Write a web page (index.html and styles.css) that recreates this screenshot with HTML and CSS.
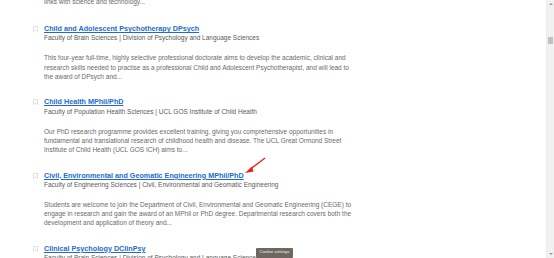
FILE: index.html
```html
<!DOCTYPE html>
<html lang="en">
<head>
    <meta charset="UTF-8">
    <meta name="viewport" content="width=device-width, initial-scale=1.0">
    <title>Programme search results</title>
    <link rel="stylesheet" href="styles.css">
</head>
<body>
    <div class="page">
        <div class="results">
            <div class="item">
                <div class="mark"></div>
                <div class="body">
                    <p class="desc first">links with science and technology...</p>
                </div>
            </div>
            <div class="item">
                <div class="mark"><svg viewBox="0 0 5 6"><path d="M0.5 0.5h4v5l-2-1.5l-2 1.5z"/></svg></div>
                <div class="body">
                    <a class="title" href="#">Child and Adolescent Psychotherapy DPsych</a>
                    <div class="faculty">Faculty of Brain Sciences | Division of Psychology and Language Sciences</div>
                    <p class="desc">This four-year full-time, highly selective professional doctorate aims to develop the academic, clinical and<br>research skills needed to practise as a professional Child and Adolescent Psychotherapist, and will lead to<br>the award of DPsych and...</p>
                </div>
            </div>
            <div class="item">
                <div class="mark"><svg viewBox="0 0 5 6"><path d="M0.5 0.5h4v5l-2-1.5l-2 1.5z"/></svg></div>
                <div class="body">
                    <a class="title" href="#">Child Health MPhil/PhD</a>
                    <div class="faculty">Faculty of Population Health Sciences | UCL GOS Institute of Child Health</div>
                    <p class="desc">Our PhD research programme provides excellent training, giving you comprehensive opportunities in<br>fundamental and translational research of childhood health and disease. The UCL Great Ormond Street<br>Institute of Child Health (UCL GOS ICH) aims to...</p>
                </div>
            </div>
            <div class="item">
                <div class="mark"><svg viewBox="0 0 5 6"><path d="M0.5 0.5h4v5l-2-1.5l-2 1.5z"/></svg></div>
                <div class="body">
                    <a class="title" href="#">Civil, Environmental and Geomatic Engineering MPhil/PhD</a>
                    <div class="faculty">Faculty of Engineering Sciences | Civil, Environmental and Geomatic Engineering</div>
                    <p class="desc">Students are welcome to join the Department of Civil, Environmental and Geomatic Engineering (CEGE) to<br>engage in research and gain the award of an MPhil or PhD degree. Departmental research covers both the<br>development and application of theory and...</p>
                </div>
            </div>
            <div class="item">
                <div class="mark"><svg viewBox="0 0 5 6"><path d="M0.5 0.5h4v5l-2-1.5l-2 1.5z"/></svg></div>
                <div class="body">
                    <a class="title" href="#">Clinical Psychology DClinPsy</a>
                    <div class="faculty">Faculty of Brain Sciences | Division of Psychology and Language Sciences</div>
                </div>
            </div>

            <svg class="arrow" viewBox="0 0 24 20">
                <path d="M22 1L6 13" stroke="#e8231d" stroke-width="1.4" fill="none"/>
                <path d="M2 16L9 9.5L10.5 14.5z" fill="#e8231d"/>
            </svg>
            <div class="cookie">Cookie settings</div>
        </div>

        <div class="scrollbar">
            <div class="arrow-up"></div>
            <div class="thumb"></div>
            <div class="arrow-down"></div>
        </div>
    </div>
</body>
</html>
```

FILE: styles.css
```css
body {
    margin: 0;
    background-color: #fff;
    font-family: "Liberation Sans", Arial, sans-serif;
    overflow: hidden;
}
.page {
    display: flex;
    width: 554px;
    height: 258px;
    overflow: hidden;
}
.results {
    position: relative;
    flex: 1;
    margin-top: -2.7px;
}
.item {
    display: flex;
    padding-bottom: 16.1px;
}
.item:first-child {
    padding-bottom: 17.4px;
}
.mark {
    width: 11px;
    margin-left: 33px;
    padding-top: 2px;
}
.mark svg {
    display: block;
    width: 5px;
    height: 6px;
}
.mark path {
    fill: none;
    stroke: #d9d9d9;
    stroke-width: 0.8;
}
.body {
    flex: 1;
}
.title {
    display: block;
    font-size: 7.2px;
    line-height: 9.3px;
    font-weight: bold;
    color: #1b6bd0;
    text-decoration: underline;
}
.faculty {
    font-size: 6.5px;
    line-height: 9.3px;
    color: #5a5a5a;
}
.desc {
    margin: 10.7px 0 0;
    font-size: 6.5px;
    line-height: 9.3px;
    color: #6a6a6a;
    white-space: nowrap;
}
.desc.first {
    margin-top: 0;
}
.arrow {
    position: absolute;
    left: 243px;
    top: 160px;
    width: 24px;
    height: 20px;
}
.cookie {
    position: absolute;
    left: 256px;
    top: 250.7px;
    width: 37px;
    height: 10px;
    background-color: #6e665f;
    color: #eee;
    font-size: 4.4px;
    line-height: 8px;
    text-align: center;
    border-radius: 1px;
}
.scrollbar {
    position: relative;
    width: 7px;
    background-color: #f1f1f1;
    border-left: 1px solid #ececec;
}
.arrow-up, .arrow-down {
    position: absolute;
    left: 2px;
    width: 0;
    height: 0;
    border-left: 2px solid transparent;
    border-right: 2px solid transparent;
}
.arrow-up {
    top: 3px;
    border-bottom: 2px solid #9a9a9a;
}
.arrow-down {
    bottom: 3px;
    border-top: 2px solid #9a9a9a;
}
.thumb {
    position: absolute;
    left: 1px;
    top: 37px;
    width: 5px;
    height: 7px;
    background-color: #c1c1c1;
}
```
